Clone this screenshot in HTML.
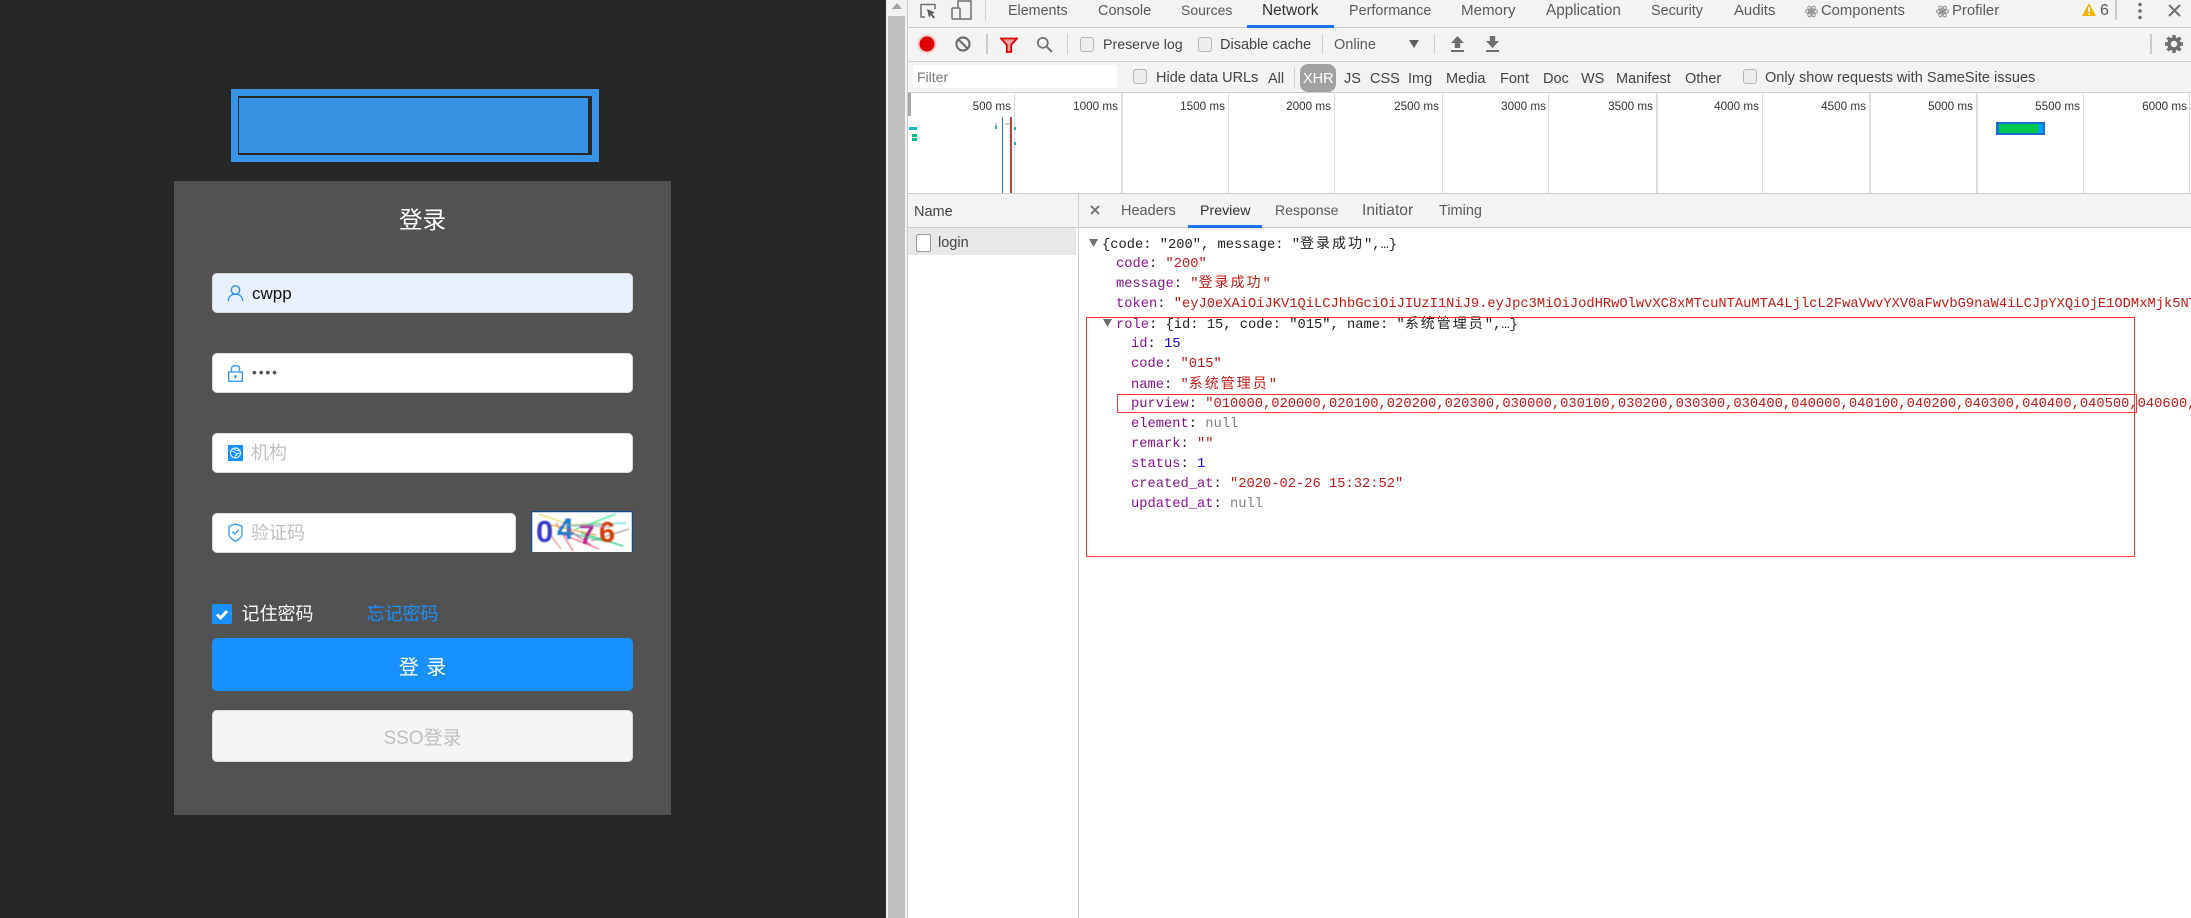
<!DOCTYPE html>
<html lang="zh"><head><meta charset="utf-8"><title>登录</title>
<style>
html,body{margin:0;padding:0;width:2191px;height:918px;overflow:hidden;background:#fff}
body{position:relative;font-family:"Liberation Sans","Noto Sans CJK SC",sans-serif}
div,span,svg{position:absolute;box-sizing:border-box}
.t{white-space:pre;line-height:20px;height:20px}
.input{background:#fff;border:1px solid #d9d9d9;border-radius:5px}
.c18{font-size:18px}
.ph{color:#bfbfbf;font-size:18px}
.tab{font-size:14.6px;color:#5a5a5a;top:1px}
.fl{font-size:14.5px;color:#444;top:68px}
.cb{width:14px;height:15px;background:#eee;border:1px solid #b5b5b5;border-radius:3px}
.sep{width:1px;background:#ccc}
.grid{top:93px;height:100px;width:1px;background:#ddd}
.ms{top:97px;font-size:11.7px;color:#333;text-align:right;width:60px}
.bar{height:2.5px}
.j{font-family:"Liberation Mono","Noto Sans CJK SC",monospace;font-size:13.75px;left:0;color:#222}
.k{color:#881391}.s{color:#c41a16}.n{color:#1c00cf}.u{color:#808080}
.z{font-family:"Noto Sans CJK SC",sans-serif;font-size:14px;letter-spacing:2px}
.j span{position:static}
</style></head><body>

<!-- LEFT PANEL -->
<div style="left:0;top:0;width:886px;height:918px;background:#272727"></div>
<div style="left:231px;top:89px;width:368px;height:73px;background:#3794e4"></div>
<div style="left:238px;top:96px;width:354px;height:59px;border:2px solid #272727;border-left-width:1px;border-right-width:4px;background:#3794e4"></div>
<div style="left:174px;top:181px;width:497px;height:634px;background:#525252"></div>
<div class="t" style="left:399px;top:210px;width:48px;font-size:23.5px;color:#fff;line-height:20px">登录</div>

<div class="input" style="left:212px;top:273px;width:421px;height:40px;background:#e8f0fe"></div>
<svg style="left:227px;top:284px" width="17" height="18" viewBox="0 0 17 18" fill="none" stroke="#2f95f5" stroke-width="1.4"><circle cx="8.5" cy="6" r="4.2"/><path d="M1.2 17c.4-4.400 3.300-6.800 7.300-6.800s6.900 2.400 7.300 6.800"/></svg>
<div class="t" style="left:252px;top:283.500px;font-size:17px;color:#111">cwpp</div>

<div class="input" style="left:212px;top:353px;width:421px;height:40px"></div>
<svg style="left:228px;top:365px" width="15" height="17" viewBox="0 0 15 17" fill="none" stroke="#2f95f5" stroke-width="1.300"><rect x=".7" y="7" width="13.600" height="9.300"/><path d="M3.500 7V3.500C3.500 1.700 5 .7 7.500 .7S11.500 1.700 11.500 3.500V7"/><path d="M7.500 11v2.500" stroke-width="1.500"/><path d="M6 11h3" stroke-width="1.300"/></svg>
<div class="t" style="left:252px;top:362px;font-size:14px;letter-spacing:1.800px;color:#555">••••</div>

<div class="input" style="left:212px;top:433px;width:421px;height:40px"></div>
<svg style="left:228px;top:445px" width="15" height="16" viewBox="0 0 15 16"><rect width="15" height="16" fill="#1890ff"/><circle cx="7.500" cy="8" r="5" fill="none" stroke="#fff" stroke-width="1"/><path d="M3 6c3 0 5 1 6 5M5 3.500c2 2 5 2.500 7 2M7 13c0-3 2-5 5-5" fill="none" stroke="#fff" stroke-width=".8"/></svg>
<div class="t ph" style="left:251px;top:443px">机构</div>

<div class="input" style="left:212px;top:513px;width:304px;height:40px"></div>
<svg style="left:228px;top:523px" width="15" height="19" viewBox="0 0 15 19" fill="none" stroke="#2f95f5" stroke-width="1.300"><path d="M7.500 .9l6.500 2.300v8c0 3-3 5.200-6.500 7-3.500-1.800-6.500-4-6.500-7v-8z"/><path d="M4.500 8.500l2.300 2.400 3.700-4"/></svg>
<div class="t ph" style="left:251px;top:523px">验证码</div>

<svg style="left:531px;top:511px" width="102" height="41" viewBox="0 0 102 41">
<rect width="102" height="41" fill="#fff"/>
<g style="filter:blur(.5px)">
<g fill="none" stroke-width="1.400">
<path d="M8 3L40 14 70 12" stroke="#e8d86a"/>
<path d="M45 18L85 3" stroke="#50e8a8"/>
<path d="M25 12L42 40" stroke="#f08090"/>
<path d="M28 22L68 38" stroke="#ff7090"/>
<path d="M35 15L95 12" stroke="#70e0e0"/>
<path d="M50 22L92 35" stroke="#30d080"/>
<path d="M20 14L65 24" stroke="#e8a040"/>
<path d="M60 30L98 18" stroke="#a0a0a0"/>
<path d="M18 22L30 38" stroke="#e8a0a0"/>
</g>
<g font-family="'Liberation Sans',sans-serif" font-weight="bold">
<text x="5" y="31" fill="#3a3acc" font-size="31">0</text>
<text x="26" y="28" fill="#2277cc" font-size="30">4</text>
<text x="48" y="33" fill="#aa2288" font-size="28">7</text>
<text x="68" y="31" fill="#d04010" font-size="29">6</text>
</g>
<g fill="none" stroke-width="1.200" opacity=".8">
<path d="M30 14L80 16" stroke="#b0a0c0"/>
<path d="M38 22L72 30" stroke="#30c080"/>
<path d="M36 18L60 34" stroke="#d04080"/>
</g>
</g>
<path d="M.5 41V.5h101V41" fill="none" stroke="#0d4a8f" stroke-width="1.500"/>
</svg>

<div style="left:212px;top:604px;width:20px;height:20px;background:#1890ff;border-radius:2px"></div>
<svg style="left:212px;top:604px" width="20" height="20" viewBox="0 0 20 20" fill="none" stroke="#fff" stroke-width="3"><path d="M5 10.500l3.500 3.500 6.500-7"/></svg>
<div class="t c18" style="left:241.500px;top:604px;color:#fff">记住密码</div>
<div class="t c18" style="left:366.500px;top:604px;color:#1890ff">忘记密码</div>

<div style="left:212px;top:638px;width:421px;height:53px;background:#1890ff;border-radius:5px"></div>
<div class="t" style="left:212px;top:656px;width:421px;text-align:center;font-size:20px;color:#fff;line-height:24px;height:24px;word-spacing:2px">登 录</div>
<div style="left:212px;top:710px;width:421px;height:52px;background:#f5f5f5;border:1px solid #d9d9d9;border-radius:5px"></div>
<div class="t" style="left:212px;top:727px;width:421px;text-align:center;font-size:19px;color:#bfbfbf;line-height:24px;height:24px">SSO登录</div>

<!-- SCROLLBAR -->
<div style="left:886px;top:0;width:22px;height:918px;background:#f1f1f1;border-right:1px solid #ccc"></div>
<div style="left:888px;top:16px;width:17px;height:902px;background:#c1c1c1"></div>
<svg style="left:892px;top:3px" width="10" height="6" viewBox="0 0 10 6"><path d="M5 0l5 6H0z" fill="#a3a3a3"/></svg>

<!-- TOP TABS -->
<div style="left:908px;top:0;width:1283px;height:193px;background:#f3f3f3"></div>
<div style="left:908px;top:27px;width:1283px;height:1px;background:#ccc"></div>
<div style="left:908px;top:61px;width:1283px;height:1px;background:#ccc"></div>
<div style="left:908px;top:92px;width:1283px;height:1px;background:#ccc"></div>

<svg style="left:918px;top:2px" width="20" height="18" viewBox="0 0 20 18" fill="none" stroke="#6e6e6e" stroke-width="1.500"><path d="M7 15H3V2.500h14V7"/><path d="M9 7l8 3.500-3 1.200 3 3.500-1.500 1.300-3-3.500-1.500 2.800z" fill="#5a5a5a" stroke="none"/></svg>
<svg style="left:951px;top:0" width="21" height="20" viewBox="0 0 21 20" fill="none" stroke="#6e6e6e" stroke-width="1.500"><path d="M7 8V1h13v18H8"/><rect x="1" y="8" width="8" height="11" rx="1"/></svg>
<div class="sep" style="left:985px;top:0;height:20px"></div>

<div class="t tab" style="left:1008px;font-size:14.3px">Elements</div>
<div class="t tab" style="left:1098px;font-size:14.5px">Console</div>
<div class="t tab" style="left:1181px;font-size:14px;top:0">Sources</div>
<div class="t tab" style="left:1262px;color:#333;font-size:15.4px">Network</div>
<div style="left:1247px;top:25px;width:87px;height:3px;background:#1a73e8"></div>
<div class="t tab" style="left:1349px;font-size:14.4px">Performance</div>
<div class="t tab" style="left:1461px;font-size:15.1px">Memory</div>
<div class="t tab" style="left:1546px;font-size:15.3px">Application</div>
<div class="t tab" style="left:1651px;font-size:14.4px">Security</div>
<div class="t tab" style="left:1734px;font-size:14.9px">Audits</div>
<svg style="left:1805px;top:5px" width="13" height="13" viewBox="0 0 13 13" fill="none" stroke="#8a8a8a" stroke-width=".9"><ellipse cx="6.500" cy="6.500" rx="6" ry="2.400"/><ellipse cx="6.500" cy="6.500" rx="6" ry="2.400" transform="rotate(60 6.500 6.500)"/><ellipse cx="6.500" cy="6.500" rx="6" ry="2.400" transform="rotate(120 6.500 6.500)"/><circle cx="6.500" cy="6.500" r="1.200" fill="#8a8a8a"/></svg>
<div class="t tab" style="left:1821px;font-size:14.8px">Components</div>
<svg style="left:1936px;top:5px" width="13" height="13" viewBox="0 0 13 13" fill="none" stroke="#8a8a8a" stroke-width=".9"><ellipse cx="6.500" cy="6.500" rx="6" ry="2.400"/><ellipse cx="6.500" cy="6.500" rx="6" ry="2.400" transform="rotate(60 6.500 6.500)"/><ellipse cx="6.500" cy="6.500" rx="6" ry="2.400" transform="rotate(120 6.500 6.500)"/><circle cx="6.500" cy="6.500" r="1.200" fill="#8a8a8a"/></svg>
<div class="t tab" style="left:1952px;font-size:14.9px">Profiler</div>

<svg style="left:2082px;top:3px" width="14" height="13" viewBox="0 0 14 13"><path d="M7 0l7 13H0z" fill="#f4b400"/><path d="M7 4v5M7 10.200v1.500" stroke="#fff" stroke-width="1.700"/></svg>
<div class="t" style="left:2100px;top:1px;font-size:16px;color:#5a5a5a">6</div>
<div class="sep" style="left:2115px;top:0;height:20px;width:2px"></div>
<svg style="left:2137px;top:2px" width="6" height="18" viewBox="0 0 6 18" fill="#6e6e6e"><circle cx="3" cy="2.500" r="1.800"/><circle cx="3" cy="9" r="1.800"/><circle cx="3" cy="15.500" r="1.800"/></svg>
<svg style="left:2168px;top:4px" width="13" height="13" viewBox="0 0 13 13" stroke="#6e6e6e" stroke-width="2"><path d="M1 1l11 11M12 1L1 12"/></svg>

<!-- TOOLBAR -->
<svg style="left:917px;top:34px" width="20" height="20" viewBox="0 0 20 20"><circle cx="10" cy="10" r="9.500" fill="#f6c9c9"/><circle cx="10" cy="10" r="7.500" fill="#e00000"/></svg>
<svg style="left:955px;top:36px" width="16" height="16" viewBox="0 0 16 16" fill="none" stroke="#6e6e6e" stroke-width="2.200"><circle cx="8" cy="8" r="6.500"/><path d="M3.500 3.500l9 9"/></svg>
<div class="sep" style="left:986px;top:34px;height:20px;width:2px"></div>
<svg style="left:1000px;top:37px" width="18" height="16" viewBox="0 0 18 16"><path d="M1 1.500h16l-5.800 6.300V15H6.800V7.800z" fill="#f4a0a0" stroke="#e00000" stroke-width="1.800"/></svg>
<svg style="left:1036px;top:36px" width="17" height="17" viewBox="0 0 17 17" fill="none" stroke="#6e6e6e" stroke-width="1.700"><circle cx="6.800" cy="6.800" r="5"/><path d="M10.500 10.500l5.500 5.500" stroke-width="2"/></svg>
<div class="sep" style="left:1067px;top:34px;height:20px"></div>
<div class="cb" style="left:1080px;top:37px"></div>
<div class="t fl" style="left:1103px;top:34.500px;font-size:14.2px">Preserve log</div>
<div class="cb" style="left:1198px;top:37px"></div>
<div class="t fl" style="left:1220px;top:34.500px">Disable cache</div>
<div class="sep" style="left:1322px;top:34px;height:20px"></div>
<div class="t fl" style="left:1334px;top:34.500px;color:#5a5a5a">Online</div>
<svg style="left:1409px;top:40px" width="10" height="8" viewBox="0 0 10 8"><path d="M0 0h10L5 8z" fill="#5f5f5f"/></svg>
<div class="sep" style="left:1434px;top:34px;height:20px"></div>
<svg style="left:1451px;top:36px" width="13" height="16" viewBox="0 0 13 16" fill="#6e6e6e"><path d="M6.500 0L13 7H9.200v5H3.800V7H0z"/><rect y="14" width="13" height="2"/></svg>
<svg style="left:1486px;top:36px" width="13" height="16" viewBox="0 0 13 16" fill="#6e6e6e"><path d="M6.500 12L13 5H9.200V0H3.800v5H0z"/><rect y="14" width="13" height="2"/></svg>
<div class="sep" style="left:2150px;top:34px;height:20px;width:2px"></div>
<svg style="left:2165px;top:35px" width="18" height="18" viewBox="0 0 18 18"><circle cx="9" cy="9" r="5" fill="none" stroke="#6e6e6e" stroke-width="3.600"/><g stroke="#6e6e6e" stroke-width="3.400"><path d="M9 0v3M9 15v3M0 9h3M15 9h3M2.600 2.600l2.100 2.100M13.300 13.300l2.100 2.100M2.600 15.400l2.100-2.100M13.300 4.700l2.100-2.100"/></g></svg>

<!-- FILTER ROW -->
<div style="left:913px;top:65px;width:204px;height:23px;background:#fff"></div>
<div class="t" style="left:917px;top:67px;font-size:14px;color:#777">Filter</div>
<div class="cb" style="left:1133px;top:69px"></div>
<div class="t fl" style="left:1156px">Hide data URLs</div>
<div class="t fl" style="left:1268px;top:69px">All</div>
<div class="sep" style="left:1294px;top:68px;height:20px"></div>
<div style="left:1300px;top:64px;width:36px;height:28px;background:#a1a1a1;border-radius:8px"></div>
<div class="t fl" style="left:1303px;top:69px;color:#fff;width:30px">XHR</div>
<div class="t fl" style="left:1344px;top:69px">JS</div>
<div class="t fl" style="left:1370px;top:69px">CSS</div>
<div class="t fl" style="left:1408px;top:69px">Img</div>
<div class="t fl" style="left:1446px;top:69px">Media</div>
<div class="t fl" style="left:1500px;top:69px">Font</div>
<div class="t fl" style="left:1543px;top:69px">Doc</div>
<div class="t fl" style="left:1581px;top:69px">WS</div>
<div class="t fl" style="left:1616px;top:69px">Manifest</div>
<div class="t fl" style="left:1685px;top:69px">Other</div>
<div class="cb" style="left:1743px;top:69px"></div>
<div class="t fl" style="left:1765px;letter-spacing:.03px">Only show requests with SameSite issues</div>

<!-- OVERVIEW -->
<div style="left:908px;top:93px;width:1283px;height:100px;background:#fff"></div>
<div style="left:908px;top:93px;width:3px;height:23px;background:#a8a8a8"></div>
<div class="grid" style="left:1014px"></div><div class="grid" style="left:1121px;width:2px"></div><div class="grid" style="left:1228px"></div><div class="grid" style="left:1334px"></div><div class="grid" style="left:1442px"></div><div class="grid" style="left:1548px"></div><div class="grid" style="left:1656px;width:2px"></div><div class="grid" style="left:1762px"></div><div class="grid" style="left:1869px;width:2px"></div><div class="grid" style="left:1976px;width:2px"></div><div class="grid" style="left:2083px"></div><div class="grid" style="left:2189px"></div>
<div class="t ms" style="left:951px">500 ms</div>
<div class="t ms" style="left:1058px">1000 ms</div>
<div class="t ms" style="left:1165px">1500 ms</div>
<div class="t ms" style="left:1271px">2000 ms</div>
<div class="t ms" style="left:1379px">2500 ms</div>
<div class="t ms" style="left:1486px">3000 ms</div>
<div class="t ms" style="left:1593px">3500 ms</div>
<div class="t ms" style="left:1699px">4000 ms</div>
<div class="t ms" style="left:1806px">4500 ms</div>
<div class="t ms" style="left:1913px">5000 ms</div>
<div class="t ms" style="left:2020px">5500 ms</div>
<div class="t ms" style="left:2127px">6000 ms</div>
<div class="bar" style="left:909px;top:127px;width:8px;background:#10b8c0"></div>
<div style="left:912px;top:134px;width:5px;height:3px;background:#10b880"></div>
<div style="left:912px;top:138px;width:5px;height:3px;background:#10b890"></div>
<div style="left:995px;top:123px;width:2px;height:3px;background:#ccc"></div>
<div style="left:995px;top:126px;width:2px;height:3px;background:#10b8c0"></div>
<div style="left:1005px;top:123px;width:6px;height:2px;background:#ccc"></div>
<div style="left:1014px;top:127px;width:2px;height:3px;background:#10b8c0"></div>
<div style="left:1014px;top:142px;width:2px;height:3px;background:#10b8d8"></div>
<div style="left:1002px;top:117px;width:1px;height:76px;background:#2a6cd0"></div>
<div style="left:1010px;top:117px;width:2px;height:76px;background:#c04040"></div>
<div style="left:1996px;top:122px;width:49px;height:13px;background:#1a6fd6"></div>
<div style="left:1999px;top:124px;width:39px;height:9px;background:#00c853"></div>
<div style="left:2038px;top:124px;width:5px;height:9px;background:#00a4f0"></div>

<!-- LOWER -->
<div style="left:908px;top:193px;width:1283px;height:1px;background:#ccc"></div>
<div style="left:908px;top:194px;width:1283px;height:33px;background:#f3f3f3"></div>
<div style="left:908px;top:227px;width:1283px;height:1px;background:#ccc"></div>
<div style="left:1078px;top:194px;width:1px;height:724px;background:#ccc"></div>
<div class="t" style="left:914px;top:202px;font-size:14.500px;color:#444">Name</div>
<div style="left:908px;top:228px;width:168px;height:27px;background:#e8e8e8"></div>
<div style="left:916px;top:234px;width:15px;height:18px;background:#fff;border:1px solid #999;border-radius:2px"></div>
<div class="t" style="left:938px;top:233px;font-size:14.500px;color:#444">login</div>
<svg style="left:1090px;top:205px" width="10" height="10" viewBox="0 0 10 10" stroke="#6e6e6e" stroke-width="1.800"><path d="M1 1l8 8M9 1L1 9"/></svg>
<div class="t fl" style="left:1121px;top:201px;color:#5a5a5a">Headers</div>
<div class="t fl" style="left:1200px;top:201px;color:#333;font-size:14.2px">Preview</div>
<div style="left:1188px;top:225px;width:74px;height:3px;background:#1a73e8"></div>
<div class="t fl" style="left:1275px;top:200px;color:#5a5a5a;font-size:14.1px">Response</div>
<div class="t fl" style="left:1362px;top:201px;color:#5a5a5a;font-size:15.6px">Initiator</div>
<div class="t fl" style="left:1439px;top:201px;color:#5a5a5a">Timing</div>

<!-- JSON -->
<svg style="left:1089px;top:239px" width="9" height="8" viewBox="0 0 9 8"><path d="M0 0h9L4.500 8z" fill="#6e6e6e"/></svg>
<div class="t j" style="left:1102px;top:233px">{code: "200", message: "<span class="z">登录成功</span>",…}</div>
<div class="t j" style="left:1116px;top:255px"><span class="k">code</span>: <span class="s">"200"</span></div>
<div class="t j" style="left:1116px;top:272px"><span class="k">message</span>: <span class="s">"<span class="z">登录成功</span>"</span></div>
<div class="t j" style="left:1116px;top:295px"><span class="k">token</span>: <span class="s">"eyJ0eXAiOiJKV1QiLCJhbGciOiJIUzI1NiJ9.eyJpc3MiOiJodHRwOlwvXC8xMTcuNTAuMTA4LjlcL2FwaVwvYXV0aFwvbG9naW4iLCJpYXQiOjE1ODMxMjk5NT</span></div>
<svg style="left:1103px;top:319px" width="9" height="8" viewBox="0 0 9 8"><path d="M0 0h9L4.500 8z" fill="#6e6e6e"/></svg>
<div class="t j" style="left:1116px;top:313px"><span class="k">role</span>: {id: 15, code: "015", name: "<span class="z">系统管理员</span>",…}</div>
<div class="t j" style="left:1131px;top:335px"><span class="k">id</span>: <span class="n">15</span></div>
<div class="t j" style="left:1131px;top:355px"><span class="k">code</span>: <span class="s">"015"</span></div>
<div class="t j" style="left:1131px;top:373px"><span class="k">name</span>: <span class="s">"<span class="z">系统管理员</span>"</span></div>
<div class="t j" style="left:1131px;top:395px"><span class="k">purview</span>: <span class="s">"010000,020000,020100,020200,020300,030000,030100,030200,030300,030400,040000,040100,040200,040300,040400,040500,040600,</span></div>
<div class="t j" style="left:1131px;top:415px"><span class="k">element</span>: <span class="u">null</span></div>
<div class="t j" style="left:1131px;top:435px"><span class="k">remark</span>: <span class="s">""</span></div>
<div class="t j" style="left:1131px;top:455px"><span class="k">status</span>: <span class="n">1</span></div>
<div class="t j" style="left:1131px;top:475px"><span class="k">created_at</span>: <span class="s">"2020-02-26 15:32:52"</span></div>
<div class="t j" style="left:1131px;top:495px"><span class="k">updated_at</span>: <span class="u">null</span></div>

<!-- RED RECTS -->
<div style="left:1086px;top:317px;width:1049px;height:240px;border:1px solid #f33"></div>
<div style="left:1117px;top:394px;width:1020px;height:19px;border:1px solid #f33"></div>
</body></html>
